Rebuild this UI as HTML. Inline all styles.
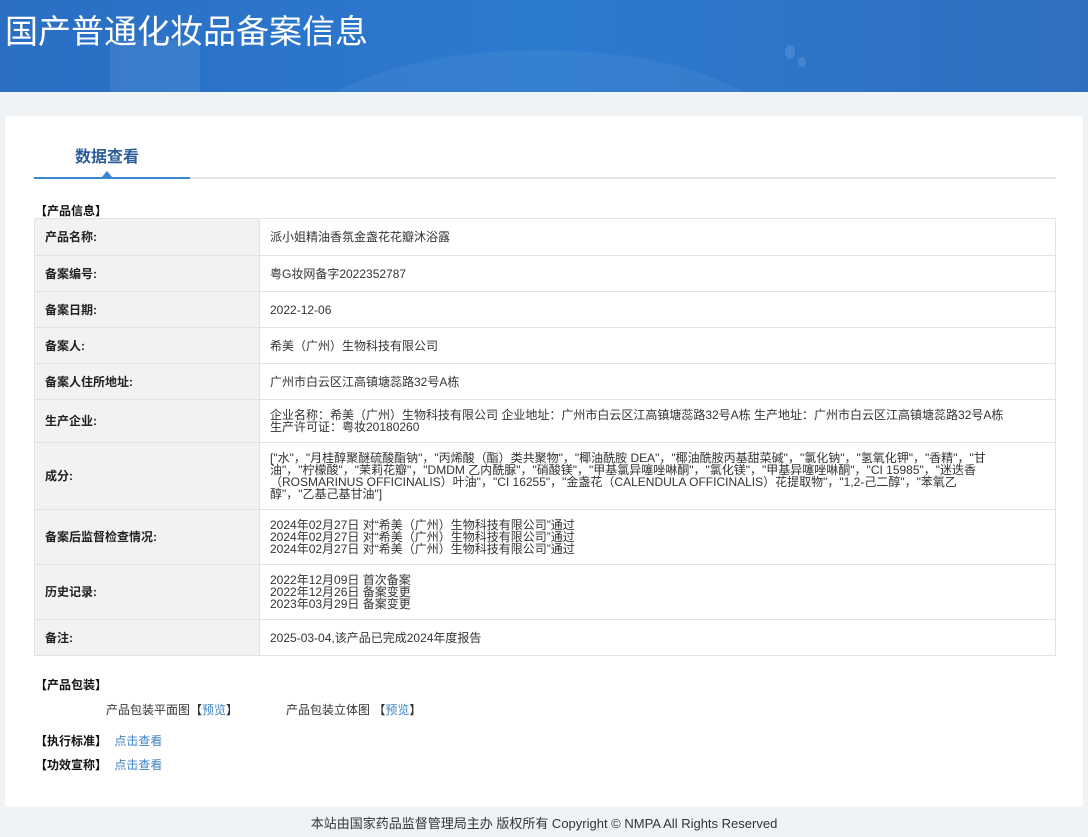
<!DOCTYPE html>
<html><head><meta charset="utf-8"><style>
*{margin:0;padding:0;box-sizing:border-box}
body{width:1088px;height:837px;background:#eff3f6;font-family:"Liberation Sans","Noto Sans CJK SC",sans-serif;font-size:12px;color:#333;position:relative;overflow:hidden}
.hdr{position:absolute;left:0;top:0;width:1088px;height:92px;background:linear-gradient(90deg,#2a6fc4,#2c7ad0 50%,#2f6fc0);overflow:hidden}
.hdr h1{position:absolute;left:5px;top:5px;color:#fff;font-size:33px;font-weight:normal;letter-spacing:0}
.card{position:absolute;left:5px;top:116px;width:1078px;height:691px;background:#fff}
.tab{position:absolute;left:70px;top:27px;font-size:16px;font-weight:bold;color:#2a5d9a}
.line{position:absolute;left:29px;top:61px;width:1022px;height:2px;background:#e5e5e5}
.line2{position:absolute;left:29px;top:61px;width:156px;height:2px;background:#3a87d0}
.tri{position:absolute;left:97px;top:55px;border-left:5px solid transparent;border-right:5px solid transparent;border-bottom:6px solid #3a87d0}
.sec{position:absolute;left:30px;font-size:12px;font-weight:bold;color:#111}
table{position:absolute;left:29px;top:102px;width:1022px;border-collapse:collapse;border:1px solid #a9bfd9}
td{border:1px solid #e3e3e3;vertical-align:middle;line-height:12px;font-size:12px}
td.l{width:225px;background:#f2f2f2;font-weight:bold;padding-left:10px;color:#222}
td.v{padding:0 10px;color:#333}
td.v div{max-width:740px}
a{color:#3a82c4;text-decoration:none}
.foot{position:absolute;left:0;top:813px;width:1088px;text-align:center;font-size:13px;color:#333}
</style></head><body>
<div class="hdr">
<div style="position:absolute;left:110px;top:40px;width:90px;height:60px;background:rgba(255,255,255,.08)"></div>
<div style="position:absolute;left:290px;top:50px;width:500px;height:200px;border-radius:50%;background:rgba(255,255,255,.05)"></div>
<div style="position:absolute;left:785px;top:45px;width:10px;height:14px;border-radius:50%;background:rgba(255,255,255,.12)"></div>
<div style="position:absolute;left:798px;top:57px;width:8px;height:10px;border-radius:50%;background:rgba(255,255,255,.12)"></div>
<h1>国产普通化妆品备案信息</h1></div>
<div class="card">
<div class="tab">数据查看</div>
<div class="line"></div><div class="line2"></div><div class="tri"></div>
<div class="sec" style="top:86px">【产品信息】</div>
<table>
<tr style="height:37px"><td class="l">产品名称:</td><td class="v">派小姐精油香氛金盏花花瓣沐浴露</td></tr>
<tr style="height:36px"><td class="l">备案编号:</td><td class="v">粤G妆网备字2022352787</td></tr>
<tr style="height:36px"><td class="l">备案日期:</td><td class="v">2022-12-06</td></tr>
<tr style="height:36px"><td class="l">备案人:</td><td class="v">希美（广州）生物科技有限公司</td></tr>
<tr style="height:36px"><td class="l">备案人住所地址:</td><td class="v">广州市白云区江高镇塘蕊路32号A栋</td></tr>
<tr style="height:43px"><td class="l">生产企业:</td><td class="v">企业名称：希美（广州）生物科技有限公司 企业地址：广州市白云区江高镇塘蕊路32号A栋 生产地址：广州市白云区江高镇塘蕊路32号A栋<br>生产许可证：粤妆20180260</td></tr>
<tr style="height:67px"><td class="l">成分:</td><td class="v"><div>["水"，"月桂醇聚醚硫酸酯钠"，"丙烯酸（酯）类共聚物"，"椰油酰胺 DEA"，"椰油酰胺丙基甜菜碱"，"氯化钠"，"氢氧化钾"，"香精"，"甘<br>油"，"柠檬酸"，"茉莉花瓣"，"DMDM 乙内酰脲"，"硝酸镁"，"甲基氯异噻唑啉酮"，"氯化镁"，"甲基异噻唑啉酮"，"CI 15985"，"迷迭香<br>（ROSMARINUS OFFICINALIS）叶油"，"CI 16255"，"金盏花（CALENDULA OFFICINALIS）花提取物"，"1,2-己二醇"，"苯氧乙<br>醇"，"乙基己基甘油"]</div></td></tr>
<tr style="height:55px"><td class="l">备案后监督检查情况:</td><td class="v">2024年02月27日 对“希美（广州）生物科技有限公司”通过<br>2024年02月27日 对“希美（广州）生物科技有限公司”通过<br>2024年02月27日 对“希美（广州）生物科技有限公司”通过</td></tr>
<tr style="height:55px"><td class="l">历史记录:</td><td class="v">2022年12月09日 首次备案<br>2022年12月26日 备案变更<br>2023年03月29日 备案变更</td></tr>
<tr style="height:36px"><td class="l">备注:</td><td class="v">2025-03-04,该产品已完成2024年度报告</td></tr>
</table>
<div class="sec" style="top:560px">【产品包装】</div>
<div style="position:absolute;left:101px;top:585px">产品包装平面图【<a>预览</a>】</div>
<div style="position:absolute;left:281px;top:585px">产品包装立体图 【<a>预览</a>】</div>
<div class="sec" style="top:616px">【执行标准】 <a style="font-weight:normal;margin-left:4px">点击查看</a></div>
<div class="sec" style="top:640px">【功效宣称】 <a style="font-weight:normal;margin-left:4px">点击查看</a></div>
</div>
<div class="foot">本站由国家药品监督管理局主办 版权所有 Copyright © NMPA All Rights Reserved</div>
</body></html>
